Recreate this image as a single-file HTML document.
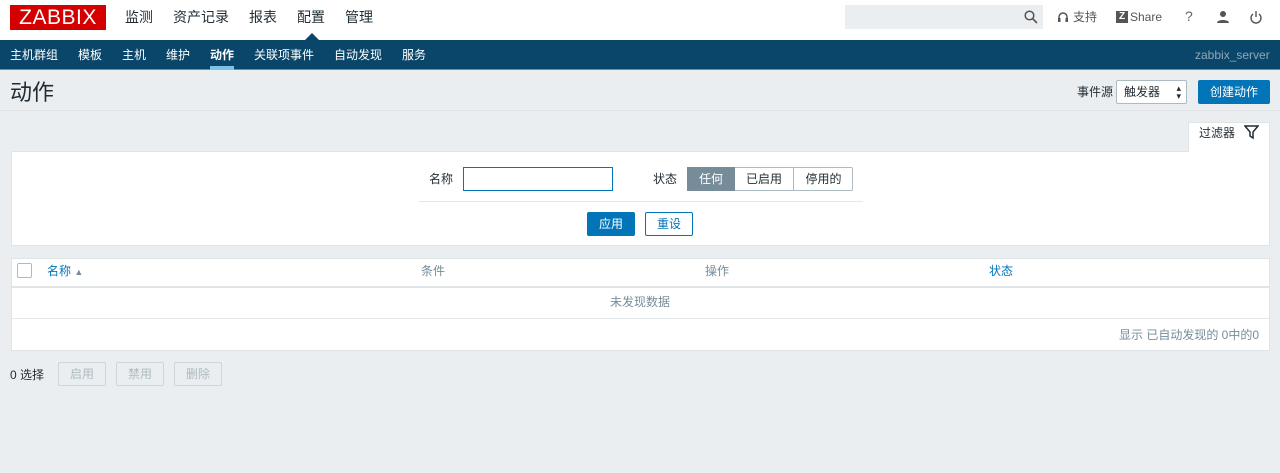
<!DOCTYPE html>
<html><head><meta charset="utf-8"><style>
*{box-sizing:border-box;margin:0;padding:0}
body{width:1280px;height:473px;background:#ebeef0;font-family:"Liberation Sans","Noto Sans CJK SC",sans-serif;font-size:12px;line-height:14px;color:#1f2c33;position:relative;overflow:hidden}
.a{position:absolute}
.hdr{left:0;top:0;width:1280px;height:40px;background:#fff}
.logo{left:10px;top:5px;width:96px;height:25px;background:#d40000;color:#fff;font-size:21px;line-height:25px;text-align:center;letter-spacing:0.5px}
.mm{top:8px;font-size:14px;line-height:18px;color:#1f2c33}
.nav{left:0;top:40px;width:1280px;height:30px;background:#0a466a;border-bottom:1px solid #768d99}
.sm{top:48px;font-size:12px;color:#fff}
.btn{background:#0275b8;color:#fff;text-align:center;border-radius:2px}
.sbtn{border:1px solid #0275b8;color:#0275b8;background:#fff;text-align:center;border-radius:2px}
.dis{border:1px solid #cfd5d8;color:#acbbc2;text-align:center;border-radius:2px;height:24px;line-height:22px;top:362px}
</style></head><body>
<div class="a hdr"></div>
<div class="a logo">ZABBIX</div>
<div class="a mm" style="left:125px">监测</div>
<div class="a mm" style="left:173px">资产记录</div>
<div class="a mm" style="left:249px">报表</div>
<div class="a mm" style="left:297px">配置</div>
<div class="a mm" style="left:345px">管理</div>
<div class="a" style="left:305px;top:33px;width:0;height:0;border-left:7px solid transparent;border-right:7px solid transparent;border-bottom:7px solid #0a466a"></div>
<div class="a" style="left:845px;top:5px;width:198px;height:24px;background:#ebeef0"></div>
<svg class="a" style="left:1024px;top:10px" width="14" height="14"><circle cx="5.5" cy="5.5" r="4.3" fill="none" stroke="#555" stroke-width="1.5"/><path d="M8.5 8.5L13 13" stroke="#555" stroke-width="1.6"/></svg>
<svg class="a" style="left:1057px;top:11px" width="12" height="12"><path d="M2 9V6a4 4 0 0 1 8 0v3" fill="none" stroke="#555" stroke-width="1.5"/><rect x="1" y="7" width="2.5" height="4" fill="#555"/><rect x="8.5" y="7" width="2.5" height="4" fill="#555"/></svg>
<div class="a" style="left:1073px;top:10px;font-size:12px;color:#555">支持</div>
<div class="a" style="left:1116px;top:11px;width:12px;height:12px;background:#555;color:#fff;font-size:10px;line-height:12px;text-align:center;font-weight:bold">Z</div>
<div class="a" style="left:1130px;top:10px;font-size:12px;color:#555">Share</div>
<div class="a" style="left:1185px;top:9px;font-size:14px;color:#666">?</div>
<svg class="a" style="left:1216px;top:10px" width="14" height="14"><circle cx="7" cy="4" r="3" fill="#555"/><path d="M1 13c0-4 12-4 12 0z" fill="#555"/></svg>
<svg class="a" style="left:1249px;top:10px" width="14" height="14"><path d="M4 4a5 5 0 1 0 6 0" fill="none" stroke="#555" stroke-width="1.4"/><path d="M7 1v6" stroke="#555" stroke-width="1.4"/></svg>
<div class="a nav"></div>
<div class="a sm" style="left:10px">主机群组</div>
<div class="a sm" style="left:78px">模板</div>
<div class="a sm" style="left:122px">主机</div>
<div class="a sm" style="left:166px">维护</div>
<div class="a sm" style="left:210px;font-weight:bold">动作</div>
<div class="a" style="left:210px;top:66px;width:24px;height:4px;background:#7dc0e8"></div>
<div class="a sm" style="left:254px">关联项事件</div>
<div class="a sm" style="left:334px">自动发现</div>
<div class="a sm" style="left:402px">服务</div>
<div class="a sm" style="left:1195px;color:#8ea8b8">zabbix_server</div>
<div class="a" style="left:10px;top:80px;font-size:22px;line-height:26px;color:#1f2c33">动作</div>
<div class="a" style="left:0;top:110px;width:1280px;height:1px;background:#e0e4e6"></div>
<div class="a" style="left:1077px;top:85px">事件源</div>
<div class="a" style="left:1116px;top:80px;width:71px;height:24px;background:#fff;border:1px solid #acbbc2;border-radius:2px;padding:4px 7px">触发器<span style="position:absolute;right:5px;top:3px;font-size:9px;line-height:8px">▴<br>▾</span></div>
<div class="a btn" style="left:1198px;top:80px;width:72px;height:24px;line-height:24px">创建动作</div>
<div class="a" style="left:1188px;top:122px;width:82px;height:30px;background:#fff;border:1px solid #dfe4e7;border-bottom:none"></div>
<div class="a" style="left:1199px;top:126px">过滤器</div>
<svg class="a" style="left:1244px;top:125px" width="15" height="15"><path d="M1 1h13L9 7v6L6 11V7z" fill="none" stroke="#1f2c33" stroke-width="1.5"/></svg>
<div class="a" style="left:11px;top:151px;width:1259px;height:95px;background:#fff;border:1px solid #dfe4e7"></div>
<div class="a" style="left:1189px;top:150px;width:80px;height:3px;background:#fff"></div>
<div class="a" style="left:429px;top:172px">名称</div>
<div class="a" style="left:463px;top:167px;width:150px;height:24px;border:1px solid #0275b8;background:#fff"></div>
<div class="a" style="left:653px;top:172px">状态</div>
<div class="a" style="left:687px;top:167px;width:166px;height:24px;border:1px solid #acbbc2;background:#fff;border-radius:2px"></div>
<div class="a" style="left:687px;top:167px;width:48px;height:24px;background:#768d99;color:#fff;text-align:center;line-height:24px">任何</div>
<div class="a" style="left:735px;top:172px;width:58px;text-align:center">已启用</div>
<div class="a" style="left:793px;top:167px;width:1px;height:24px;background:#acbbc2"></div>
<div class="a" style="left:794px;top:172px;width:59px;text-align:center">停用的</div>
<div class="a" style="left:419px;top:201px;width:444px;height:1px;background:#e6e9eb"></div>
<div class="a btn" style="left:587px;top:212px;width:48px;height:24px;line-height:24px">应用</div>
<div class="a sbtn" style="left:645px;top:212px;width:48px;height:24px;line-height:22px">重设</div>
<div class="a" style="left:11px;top:258px;width:1259px;height:93px;background:#fff;border:1px solid #dfe4e7"></div>
<div class="a" style="left:17px;top:263px;width:15px;height:15px;border:1px solid #acbbc2;border-radius:2px"></div>
<div class="a" style="left:47px;top:264px;color:#0275b8">名称 <span style="font-size:9px;color:#768d99">▲</span></div>
<div class="a" style="left:421px;top:264px;color:#768d99">条件</div>
<div class="a" style="left:705px;top:264px;color:#768d99">操作</div>
<div class="a" style="left:989px;top:264px;color:#0275b8">状态</div>
<div class="a" style="left:12px;top:286px;width:1257px;height:2px;background:#dfe4e7"></div>
<div class="a" style="left:610px;top:295px;color:#768d99">未发现数据</div>
<div class="a" style="left:12px;top:318px;width:1257px;height:1px;background:#e6e9eb"></div>
<div class="a" style="left:1119px;top:328px;color:#768d99">显示 已自动发现的 0中的0</div>
<div class="a" style="left:10px;top:368px">0 选择</div>
<div class="a dis" style="left:58px;width:48px">启用</div>
<div class="a dis" style="left:116px;width:48px">禁用</div>
<div class="a dis" style="left:174px;width:48px">删除</div>
</body></html>
